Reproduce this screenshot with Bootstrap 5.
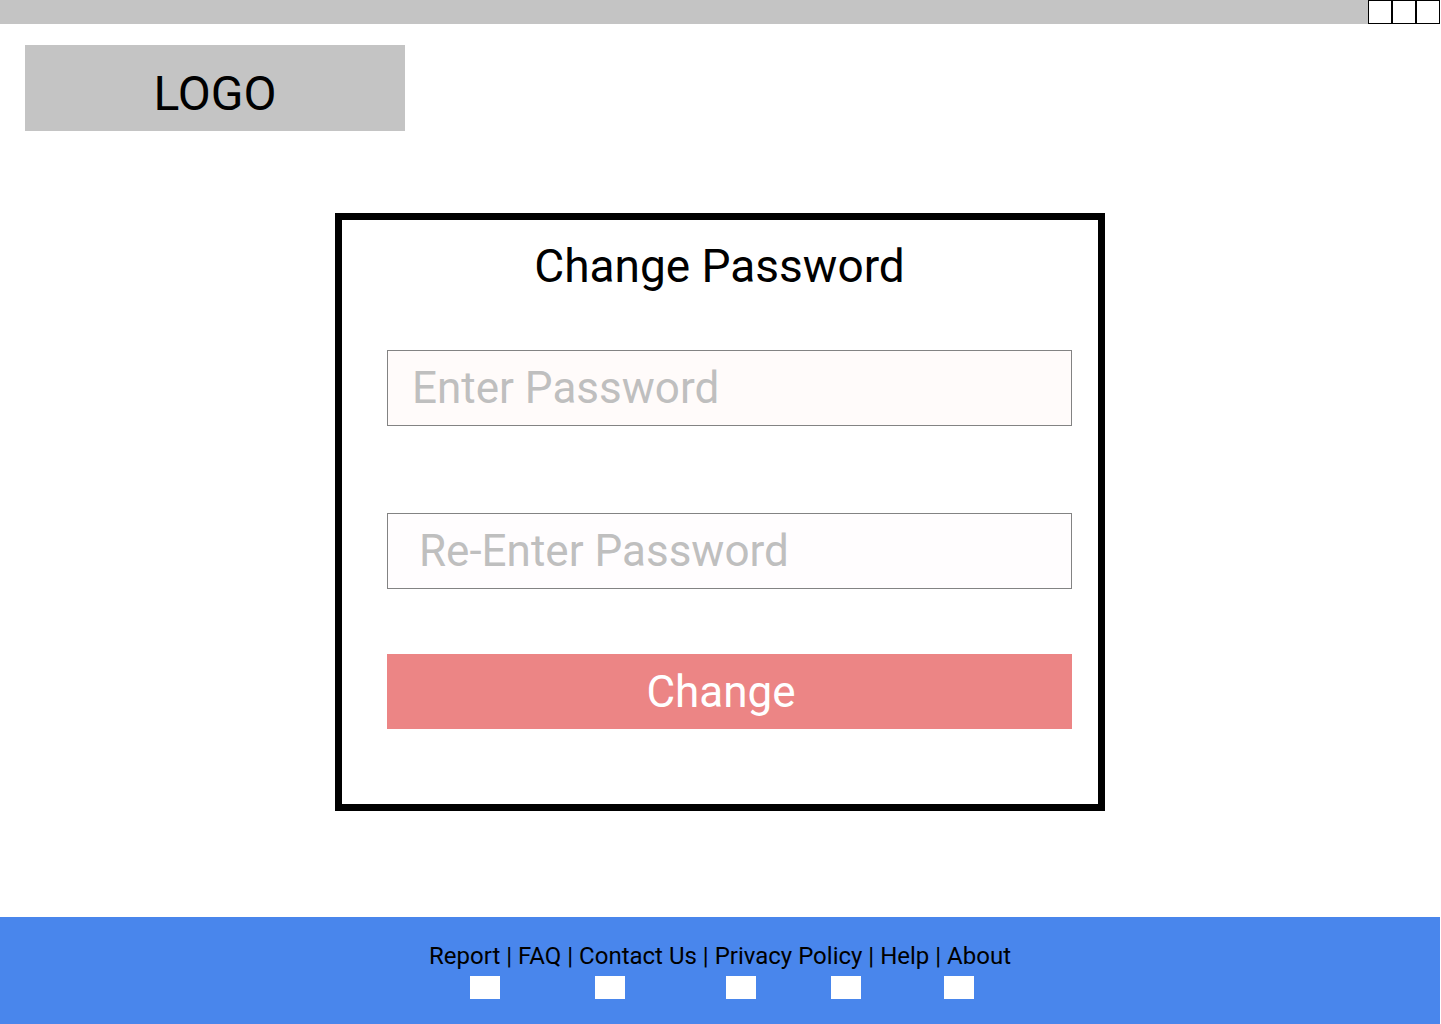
<!DOCTYPE html>
<html lang="en">
<head>
<meta charset="utf-8">
<meta name="viewport" content="width=device-width, initial-scale=1">
<title>Change Password</title>
<link href="https://cdn.jsdelivr.net/npm/bootstrap@5.3.0/dist/css/bootstrap.min.css" rel="stylesheet">
<style>
  body { font-family: Roboto, "Liberation Sans", sans-serif; color: #000; padding-right: 1px; }
  .window-bar { background: #c4c4c4; height: 24px; }
  .window-btn { width: 24px; height: 24px; background: #fff; border: 1px solid #000; padding: 0; }
  .brand-box { background: #c4c4c4; width: 380px; max-width: 100%; margin: 21px 0 0 25px; padding: 19px 0 7px; font-size: 48px; line-height: 60px; color: #000; }
  .password-panel { width: 770px; max-width: 100%; border: 7px solid #000; margin-top: 82px; padding: 19px 26px 75px 45px; }
  .panel-title { font-size: 46px; line-height: 54px; margin: 0 20px 57px 0; font-weight: 400; }
  .password-field { height: 76px; border: 1px solid #838383; border-radius: 0; font-size: 44px; line-height: 52px; }
  .password-field::placeholder { color: #bfbfbf; opacity: 1; }
  .field-first, .field-first:focus { background: #fffbfa; padding: 0 24px; margin-bottom: 87px; }
  .field-second, .field-second:focus { background: #fffdfe; padding: 0 31px; margin-bottom: 65px; }
  .btn-change, .btn-change:hover { background: #ec8585; color: #fff; height: 75px; border: 0; border-radius: 0; font-size: 44px; line-height: 52px; padding: 0 17px 0 0; }
  .site-footer { background: #4986ec; padding: 23px 0 25px; font-size: 24px; line-height: 32px; }
  .site-footer a { color: #000; text-decoration: none; }
  .social-row { display: grid; grid-template-columns: 125px 131px 105px 113px 30px; justify-content: center; margin: 4px 0 0 4px; }
  .social-tile { width: 30px; height: 23px; background: #fff; }
</style>
</head>
<body class="d-flex flex-column min-vh-100 bg-white">
<header>
  <div class="window-bar d-flex justify-content-end">
    <button type="button" class="window-btn" aria-label="Minimize"></button>
    <button type="button" class="window-btn" aria-label="Maximize"></button>
    <button type="button" class="window-btn" aria-label="Close"></button>
  </div>
  <a href="#" class="brand-box d-block text-center text-decoration-none">LOGO</a>
</header>

<main class="d-flex justify-content-center mb-5">
  <form class="password-panel">
    <h1 class="panel-title text-center">Change Password</h1>
    <input type="password" id="password" class="form-control password-field field-first" placeholder="Enter Password" aria-label="Enter Password">
    <input type="password" id="password2" class="form-control password-field field-second" placeholder="Re-Enter Password" aria-label="Re-Enter Password">
    <button type="submit" class="btn btn-change w-100 d-block">Change</button>
  </form>
</main>

<footer class="site-footer mt-auto">
  <nav class="text-center" aria-label="Footer">
    <a href="#">Report</a> | <a href="#">FAQ</a> | <a href="#">Contact Us</a> | <a href="#">Privacy Policy</a> | <a href="#">Help</a> | <a href="#">About</a>
  </nav>
  <div class="social-row">
    <a href="#" class="social-tile" aria-label="Social link 1"></a>
    <a href="#" class="social-tile" aria-label="Social link 2"></a>
    <a href="#" class="social-tile" aria-label="Social link 3"></a>
    <a href="#" class="social-tile" aria-label="Social link 4"></a>
    <a href="#" class="social-tile" aria-label="Social link 5"></a>
  </div>
</footer>
<script src="https://cdn.jsdelivr.net/npm/bootstrap@5.3.0/dist/js/bootstrap.bundle.min.js"></script>
</body>
</html>
